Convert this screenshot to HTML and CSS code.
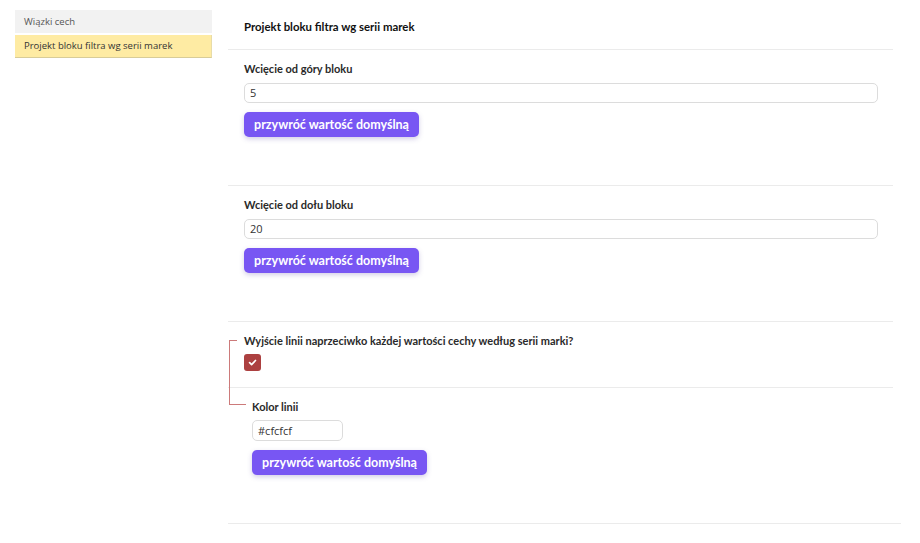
FILE: index.html
```html
<!DOCTYPE html>
<html lang="pl">
<head>
<meta charset="utf-8">
<title>Projekt bloku filtra</title>
<link rel="stylesheet" href="styles.css">
</head>
<body>
<div class="page">
  <nav class="sidebar">
    <div class="nav-item">Wiązki cech</div>
    <div class="nav-item active">Projekt bloku filtra wg serii marek</div>
  </nav>
  <main class="main">
    <div class="header">Projekt bloku filtra wg serii marek</div>

    <section class="section">
      <div class="label">Wcięcie od góry bloku</div>
      <div class="input wide">5</div>
      <button class="btn">przywróć wartość domyślną</button>
    </section>

    <section class="section">
      <div class="label">Wcięcie od dołu bloku</div>
      <div class="input wide">20</div>
      <button class="btn">przywróć wartość domyślną</button>
    </section>

    <div class="group">
      <span class="bracket"></span>
      <section class="section check-section">
        <div class="label">Wyjście linii naprzeciwko każdej wartości cechy według serii marki?</div>
        <span class="checkbox">
          <svg viewBox="0 0 10 10" width="9" height="9"><path d="M1.8 5.2 L4 7.3 L8.3 2.8" fill="none" stroke="#fff" stroke-width="1.9" stroke-linecap="round" stroke-linejoin="round"/></svg>
        </span>
      </section>
      <section class="section nested">
        <div class="label">Kolor linii</div>
        <div class="input short">#cfcfcf</div>
        <button class="btn">przywróć wartość domyślną</button>
      </section>
    </div>
  </main>
</div>
</body>
</html>
```

FILE: styles.css
```css
html, body {
  margin: 0;
  padding: 0;
  background: #fff;
}
body {
  font-family: Lato, "Open Sans", sans-serif;
  color: #222;
}
.page {
  display: flex;
  align-items: flex-start;
}
.sidebar {
  width: 197px;
  margin: 10px 0 0 15px;
  display: flex;
  flex-direction: column;
  gap: 2px;
}
.nav-item {
  height: 23px;
  line-height: 23px;
  padding-left: 9px;
  font-family: "Open Sans", sans-serif;
  font-size: 9.5px;
  color: #555;
  background: #f2f2f2;
  box-sizing: border-box;
}
.nav-item.active {
  background: #feeba3;
  color: #333;
  border-bottom: 1px solid #d8cc98;
  border-right: 1px solid #e8dca8;
  line-height: 22px;
}
.main {
  margin-left: 16px;
  width: 665px;
}
.header {
  height: 50px;
  box-sizing: border-box;
  padding: 20px 0 0 16px;
  font-size: 11.4px;
  font-weight: 700;
  line-height: 14px;
  color: #111;
  border-bottom: 1px solid #ebebeb;
}
.section {
  padding: 12px 15px 48px 16px;
  border-bottom: 1px solid #ebebeb;
  display: flex;
  flex-direction: column;
  align-items: flex-start;
}
.label {
  font-size: 11px;
  font-weight: 700;
  line-height: 14px;
  color: #2a2a2a;
}
.input {
  margin-top: 7px;
  height: 20px;
  box-sizing: border-box;
  border: 1px solid #dcdcdc;
  border-radius: 5px;
  padding-left: 5px;
  font-family: "Open Sans", sans-serif;
  font-size: 11px;
  line-height: 18px;
  color: #333;
  background: #fff;
}
.input.wide {
  align-self: stretch;
}
.input.short {
  width: 91px;
  margin-top: 6px;
  height: 21px;
  line-height: 19px;
}
.btn {
  margin-top: 9px;
  height: 25px;
  width: 175px;
  padding: 0;
  border: none;
  border-radius: 5px;
  background: #7856f3;
  color: #fff;
  font-family: Lato, "Open Sans", sans-serif;
  font-size: 12.5px;
  font-weight: 700;
  box-shadow: 0 2px 5px rgba(80, 60, 160, 0.25);
}
.group {
  position: relative;
}
.check-section {
  padding-bottom: 16px;
}
.checkbox {
  margin-top: 6px;
  width: 17px;
  height: 17px;
  border-radius: 3px;
  background: #ac4040;
  display: flex;
  align-items: center;
  justify-content: center;
}
.nested {
  padding-left: 24px;
  margin-right: -8px;
}
.bracket {
  position: absolute;
  left: 1px;
  top: 18px;
  width: 16px;
  height: 65px;
  border-left: 1px solid #cc7a7a;
}
.bracket::before {
  content: "";
  position: absolute;
  left: 0;
  top: 0;
  width: 7px;
  border-top: 1px solid #cc7a7a;
}
.bracket::after {
  content: "";
  position: absolute;
  left: 0;
  bottom: 0;
  width: 16px;
  border-top: 1px solid #cc7a7a;
}
```
